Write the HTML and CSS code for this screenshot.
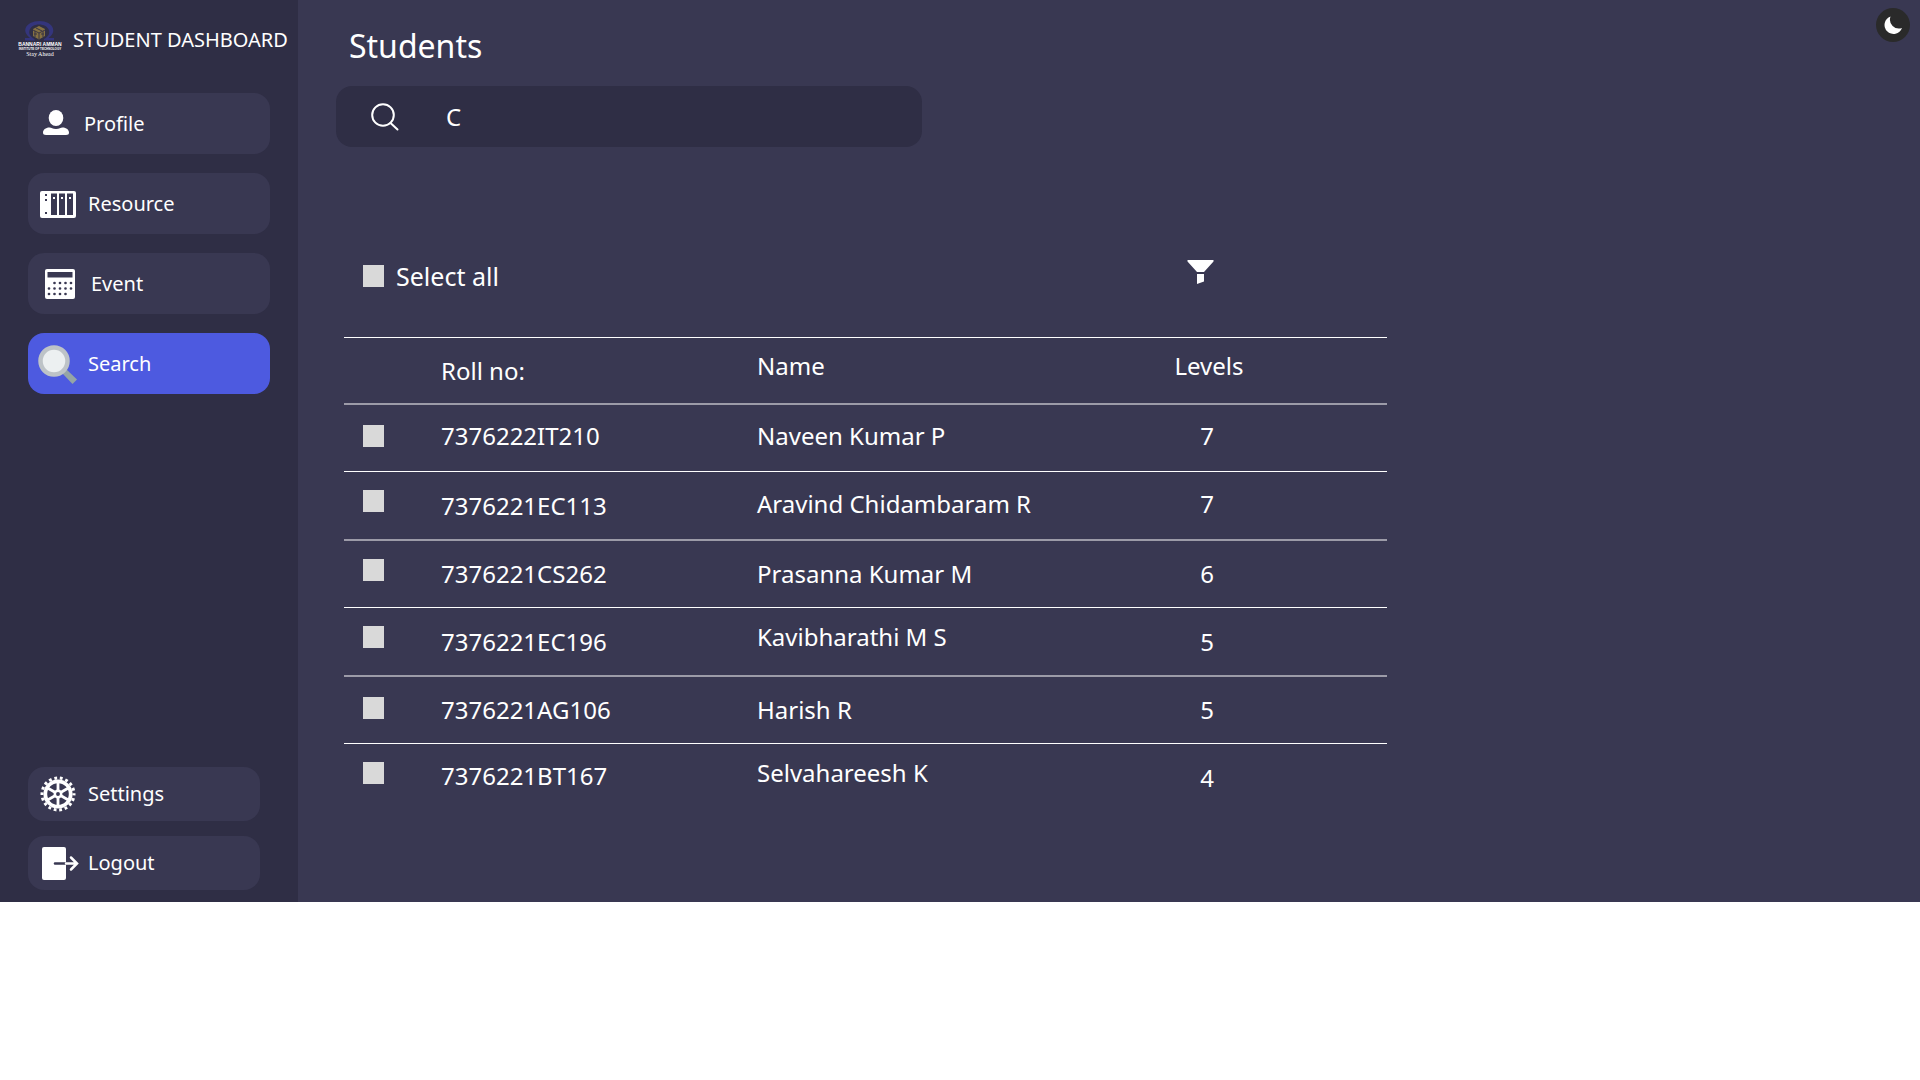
FILE: index.html
```html
<!DOCTYPE html>
<html lang="en">
<head>
<meta charset="utf-8">
<meta name="viewport" content="width=device-width, initial-scale=1">
<title>Student Dashboard</title>
<link rel="stylesheet" href="styles.css">
</head>
<body>
<div class="app">
  <aside class="sidebar">
    <div class="brand">
      <svg class="brand-logo" width="46" height="38" viewBox="0 0 46 38" aria-hidden="true">
        <path d="M8 19.500h9.500v-1.500c-4-2-6-5-5-8.500 1-4 5-6 9.500-6s9 2 10 6c1 3.500-1 6.500-5 8.500v1.500h10v-2.500h-5.500c4-3 5.500-6 4.500-9.500-1-4.500-7-7.500-13.500-7.500s-13 3-14 7.500c-1 3.500 1 6.500 4.500 9.500h-5z" fill="#34357c"/>
        <path d="M22 5l6 3v7l-6 3.500-6-3.500v-7z" fill="#857142"/>
        <path d="M16 9l6 3 6-3M22 12v6M18 10v6M20 13h-3M26 10v6M24 13h3M19 7l6 3" fill="none" stroke="#383443"/>
        <text class="logo-name" x="23" y="25" text-anchor="middle">BANNARI AMMAN</text>
        <text class="logo-line" x="23" y="29" text-anchor="middle">INSTITUTE OF TECHNOLOGY</text>
        <text class="logo-motto" x="23" y="35" text-anchor="middle">Stay Ahead</text>
      </svg>
      <span class="brand-title">STUDENT DASHBOARD</span>
    </div>
    <nav class="menu">
      <a class="menu-item" href="#profile">
        <svg width="36" height="40" viewBox="0 0 36 40" fill="#fff" aria-hidden="true"><ellipse cx="19" cy="14" rx="7.300" ry="8"/><path d="M12.500 23.500c2 0 3 1.500 6.500 1.500s4.500-1.500 6.500-1.500c4 0 6.500 2.500 6.500 5 0 1.800-1 2.500-3 2.500H9c-2 0-3-.700-3-2.500 0-2.500 2.500-5 6.500-5z"/></svg>
        Profile
      </a>
      <a class="menu-item" href="#resource">
        <svg width="40" height="40" viewBox="0 0 40 40" aria-hidden="true"><rect x="3" y="7" width="36" height="27" rx="2" fill="#fff"/><path d="M14 9.500h6V31h-6zM22 9.500h6V31h-6zM30 9.500h6V31h-6zM8 10h2v2H8zM8 15h2v2H8zM8 28h2v2H8z" fill="#393852"/><path d="M16 13h2v2h-2zM24 13h2v2h-2zM32 13h2v2h-2z" fill="#fff"/></svg>
        Resource
      </a>
      <a class="menu-item" href="#event">
        <svg width="43" height="40" viewBox="0 0 43 40" aria-hidden="true"><rect x="8" y="5" width="30" height="30" rx="2" fill="#fff"/><path d="M10.500 8h25v5.500h-25z" fill="#393852"/><path d="M17.500 19h19M12 24.500h24.500M12 30h19" fill="none" stroke="#393852" stroke-width="2.700" stroke-linecap="round" stroke-dasharray="0 5.500"/></svg>
        Event
      </a>
      <a class="menu-item menu-item-active" href="#search" aria-current="page">
        <svg width="40" height="40" viewBox="0 0 40 40" aria-hidden="true"><path d="M29 25l11 10.500-4.500 4.500L25 29z" fill="#95a5a6"/><circle cx="17" cy="17" r="13.500" fill="#ecf0f1" stroke="#bdc3c7" stroke-width="4.500"/></svg>
        Search
      </a>
    </nav>
    <nav class="menu menu-bottom">
      <a class="menu-item" href="#settings">
        <svg width="40" height="40" viewBox="0 0 40 40" fill="none" stroke="#fff" aria-hidden="true"><circle cx="21" cy="20" r="12.700" stroke-width="3.800"/><circle cx="21" cy="20" r="16" stroke-width="3" stroke-dasharray="2.800 2.785" stroke-dashoffset="1.400"/><circle cx="21" cy="20" r="3.200" stroke-width="2.500"/><path d="M21 8v8.500M21 23.500V32M10.600 14l7.400 4.250M24 21.750L31.400 26M10.600 26l7.400-4.250M24 18.250L31.400 14" stroke-width="2.800"/></svg>
        Settings
      </a>
      <a class="menu-item" href="#logout">
        <svg width="40" height="40" viewBox="0 0 40 40" fill="none" aria-hidden="true"><rect x="5" y="4" width="24" height="33" rx="2" fill="#fff"/><path d="M18 20.500h11" stroke="#393852" stroke-width="2.500" stroke-linecap="round"/><path d="M29 20.500h10.500M34 14.500l6 6-6 6" stroke="#fff" stroke-width="2.500" stroke-linecap="round"/></svg>
        Logout
      </a>
    </nav>
  </aside>
  <main class="content">
    <header class="topbar">
      <h1 class="page-title">Students</h1>
      <button class="theme-toggle" type="button" aria-label="Dark mode">
        <svg width="18" height="18" viewBox="0 0 18 18" aria-hidden="true"><path d="M6.500 .500A9 9 0 1 0 18 12 9 9 0 0 1 6.500 .500z" fill="#fff"/></svg>
      </button>
    </header>
    <label class="search-box">
      <svg width="28" height="28" viewBox="0 0 28 28" fill="none" stroke="#fff" stroke-width="2" stroke-linecap="round" aria-hidden="true"><circle cx="12" cy="12" r="10.800"/><path d="M19.500 20l7 6.500"/></svg>
      <input class="search-input" type="text" value="C" aria-label="Search students">
    </label>
    <section class="students">
      <div class="table-tools">
        <label class="select-all"><input class="tick" type="checkbox">Select all</label>
        <button class="filter" type="button" aria-label="Filter">
          <svg width="27" height="24" viewBox="0 0 27 24" fill="#fff" aria-hidden="true"><path d="M.500 0h26v1.500L17 12h-7L.500 1.500zM10 14h7v7.500L10 24z"/></svg>
        </button>
      </div>
      <table class="student-table">
        <thead>
          <tr><th class="col-tick"></th><th class="col-roll lowered">Roll no:</th><th class="col-name raised">Name</th><th class="col-level raised">Levels</th></tr>
        </thead>
        <tbody>
          <tr><td><input class="tick" type="checkbox" aria-label="Naveen Kumar P"></td><td>7376222IT210</td><td>Naveen Kumar P</td><td class="col-level">7</td></tr>
          <tr><td class="raised"><input class="tick" type="checkbox" aria-label="Aravind Chidambaram R"></td><td class="lowered">7376221EC113</td><td>Aravind Chidambaram R</td><td class="col-level">7</td></tr>
          <tr><td class="raised"><input class="tick" type="checkbox" aria-label="Prasanna Kumar M"></td><td class="lowered">7376221CS262</td><td class="lowered">Prasanna Kumar M</td><td class="col-level lowered">6</td></tr>
          <tr><td class="raised"><input class="tick" type="checkbox" aria-label="Kavibharathi M S"></td><td class="lowered">7376221EC196</td><td class="raised">Kavibharathi M S</td><td class="col-level lowered">5</td></tr>
          <tr><td><input class="tick" type="checkbox" aria-label="Harish R"></td><td class="lowered">7376221AG106</td><td class="lowered">Harish R</td><td class="col-level lowered">5</td></tr>
          <tr><td class="raised"><input class="tick" type="checkbox" aria-label="Selvahareesh K"></td><td>7376221BT167</td><td class="raised">Selvahareesh K</td><td class="col-level lowered">4</td></tr>
        </tbody>
      </table>
    </section>
  </main>
</div>
</body>
</html>
```
FILE: styles.css
```css
* {
  box-sizing: border-box;
}

body {
  margin: 0;
  background: #fff;
  color: #fff;
  font-family: "Noto Sans", sans-serif;
  font-size: 24px;
  line-height: 32px;
}

.app {
  display: flex;
  background: #393852;
}

.sidebar {
  flex: 0 0 298px;
  display: flex;
  flex-direction: column;
  background: #2f2e45;
  padding: 20px 0 12px;
  font-size: 20px;
}

.brand {
  display: flex;
  align-items: center;
  gap: 10px;
  height: 40px;
  padding-left: 17px;
  margin-bottom: 33px;
}

.brand-logo {
  flex: none;
  fill: #fff;
}

.brand-title {
  white-space: nowrap;
}

.logo-name {
  font: bold 5px "Liberation Sans", sans-serif;
}

.logo-line {
  font: bold 3px "Liberation Sans", sans-serif;
}

.logo-motto {
  font: 6px "Liberation Serif", serif;
}

.menu {
  display: flex;
  flex-direction: column;
  gap: 19px;
  padding: 0 28px;
}

.menu-item {
  display: flex;
  align-items: center;
  gap: 11px;
  height: 61px;
  padding-left: 9px;
  border-radius: 16px;
  background: #393852;
  color: #fff;
  text-decoration: none;
}

.menu-item svg {
  flex: none;
  overflow: visible;
}

.menu-item-active {
  background: #4d5ae0;
}

.menu-bottom {
  gap: 15px;
  margin-top: auto;
  padding-right: 38px;
}

.menu-bottom .menu-item {
  height: 54px;
}

.content {
  flex: 1;
  min-width: 0;
  padding: 8px 10px 91px 38px;
}

.topbar {
  display: flex;
  align-items: flex-start;
  justify-content: space-between;
  height: 78px;
  padding-left: 13px;
}

.page-title {
  margin: 0;
  font-size: 32px;
  font-weight: 400;
  line-height: 76px;
}

.theme-toggle {
  display: grid;
  place-items: center;
  width: 34px;
  height: 34px;
  padding: 0;
  border: 0;
  border-radius: 50%;
  background: #2a2a2a;
}

.search-box {
  display: flex;
  align-items: center;
  gap: 47px;
  max-width: 586px;
  height: 61px;
  padding: 0 35px;
  border-radius: 16px;
  background: #2f2e45;
}

.search-input {
  flex: 1;
  min-width: 0;
  padding: 0;
  border: 0;
  outline: 0;
  background: transparent;
  color: inherit;
  font: inherit;
}

.students {
  max-width: 1051px;
  padding: 113px 0 0 8px;
}

.table-tools {
  display: flex;
  align-items: flex-start;
  justify-content: space-between;
  height: 77px;
  padding: 0 173px 0 19px;
}

.select-all {
  display: flex;
  align-items: center;
  gap: 12px;
  font-size: 25px;
}

.tick {
  appearance: none;
  display: block;
  width: 21px;
  height: 22px;
  margin: 0;
  background: #d9d9d9;
}

.tick:checked {
  background: #4d5ae0;
}

.filter {
  padding: 0;
  border: 0;
  background: none;
}

.filter svg {
  display: block;
}

.student-table {
  width: 100%;
  border-spacing: 0;
  table-layout: fixed;
}

.student-table th,
.student-table td {
  height: 68px;
  padding: 0 0 4px;
  border-top: 1px solid #fff;
  font-weight: 400;
  text-align: left;
  vertical-align: middle;
  white-space: nowrap;
}

.student-table th {
  height: 66px;
}

.student-table tbody tr:nth-child(odd) td {
  border-top: 2px solid #9c9ba8;
}

.student-table td:first-child {
  padding-left: 19px;
}

.student-table .raised {
  padding-bottom: 9px;
}

.student-table .lowered {
  padding-bottom: 0;
}

.col-tick {
  width: 97px;
}

.col-roll {
  width: 316px;
}

.student-table .col-level {
  width: 356px;
  text-align: center;
}

.student-table td.col-level {
  padding-right: 4px;
}
```
